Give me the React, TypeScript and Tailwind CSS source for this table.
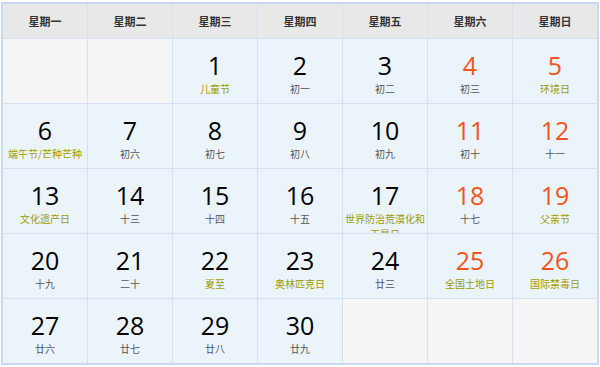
const weekDays = ['星期一', '星期二', '星期三', '星期四', '星期五', '星期六', '星期日'];

type Day = { d?: number; sub?: string; fest?: boolean; weekend?: boolean };

const days: Day[] = [
  {},
  {},
  { d: 1, sub: '儿童节', fest: true },
  { d: 2, sub: '初一' },
  { d: 3, sub: '初二' },
  { d: 4, sub: '初三', weekend: true },
  { d: 5, sub: '环境日', fest: true, weekend: true },
  { d: 6, sub: '端午节/芒种芒种', fest: true },
  { d: 7, sub: '初六' },
  { d: 8, sub: '初七' },
  { d: 9, sub: '初八' },
  { d: 10, sub: '初九' },
  { d: 11, sub: '初十', weekend: true },
  { d: 12, sub: '十一', weekend: true },
  { d: 13, sub: '文化遗产日', fest: true },
  { d: 14, sub: '十三' },
  { d: 15, sub: '十四' },
  { d: 16, sub: '十五' },
  { d: 17, sub: '世界防治荒漠化和干旱日', fest: true },
  { d: 18, sub: '十七', weekend: true },
  { d: 19, sub: '父亲节', fest: true, weekend: true },
  { d: 20, sub: '十九' },
  { d: 21, sub: '二十' },
  { d: 22, sub: '夏至', fest: true },
  { d: 23, sub: '奥林匹克日', fest: true },
  { d: 24, sub: '廿三' },
  { d: 25, sub: '全国土地日', fest: true, weekend: true },
  { d: 26, sub: '国际禁毒日', fest: true, weekend: true },
  { d: 27, sub: '廿六' },
  { d: 28, sub: '廿七' },
  { d: 29, sub: '廿八' },
  { d: 30, sub: '廿九' },
  {},
  {},
  {},
];

export default function App() {
  return (
    <div
      className="w-[600px] h-[367px] bg-white pt-[2px] px-[1px]"
      style={{ fontFamily: '"Noto Sans CJK SC", sans-serif' }}
    >
      <div className="w-[598px] border-[2px] border-[#c9daf0] bg-[#d5e1f1]">
        <div className="grid grid-cols-[repeat(7,84px)] gap-px border-b border-[#d5e1f1] bg-[#d5e1f1]">
          {weekDays.map((w) => (
            <div
              key={w}
              className="h-[34px] bg-[#e8e8e8] flex items-center justify-center text-[11px] font-bold text-[#333]"
            >
              {w}
            </div>
          ))}
        </div>
        <div className="grid grid-cols-[repeat(7,84px)] auto-rows-[64px] gap-px">
          {days.map((day, i) =>
            day.d === undefined ? (
              <div key={i} className="bg-[#f5f5f5]" />
            ) : (
              <div key={i} className="bg-[#ebf3fb] overflow-hidden flex flex-col items-center pt-[9px]">
                <div
                  className={`text-[25px] leading-[34px] ${day.weekend ? 'text-[#f2541e]' : 'text-black'}`}
                  style={{ fontFamily: '"Open Sans", sans-serif' }}
                >
                  {day.d}
                </div>
                <div
                  className={`text-[10px] leading-[15px] -mt-px text-center px-px ${day.fest ? 'text-[#9c9c00]' : 'text-[#555]'}`}
                >
                  {day.sub}
                </div>
              </div>
            )
          )}
        </div>
      </div>
    </div>
  );
}
